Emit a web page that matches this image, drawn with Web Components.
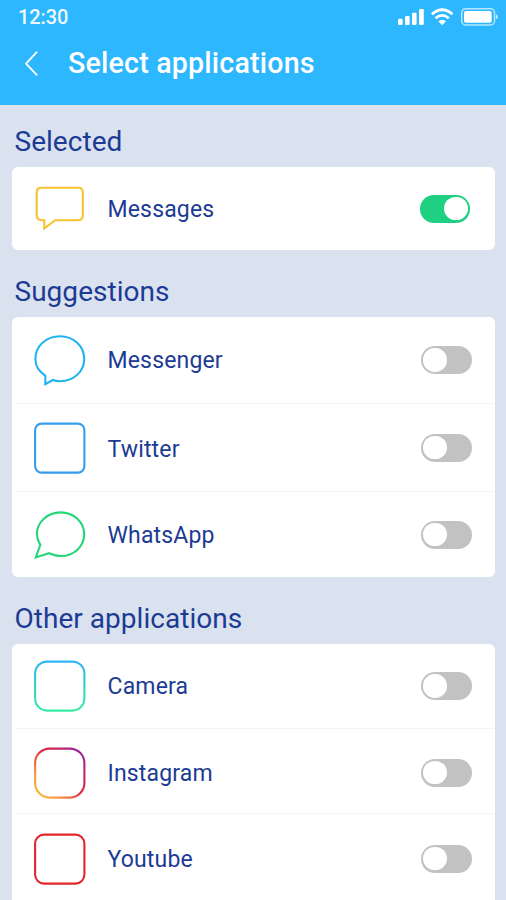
<!DOCTYPE html>
<html lang="en">
<head>
<meta charset="utf-8">
<title>Select applications</title>
<style>
html,body{margin:0;height:900px;overflow:hidden;background:#dbe2ef}
body{font-family:Roboto,"Liberation Sans",sans-serif}
</style>
</head>
<body>
<app-screen>
  <app-header slot="header" time="12:30" heading="Select applications"></app-header>
  <app-group heading="Selected" style="--head:62px">
    <app-row icon="messages" label="Messages" on style="--h:83px"></app-row>
  </app-group>
  <app-group heading="Suggestions" style="--head:67px">
    <app-row icon="messenger" label="Messenger" style="--h:87px"></app-row>
    <app-row icon="twitter" label="Twitter" style="--h:88px;--nudge:4px"></app-row>
    <app-row icon="whatsapp" label="WhatsApp" style="--h:85px"></app-row>
  </app-group>
  <app-group heading="Other applications" style="--head:67px;--tail:20px">
    <app-row icon="camera" label="Camera" style="--h:85px"></app-row>
    <app-row icon="instagram" label="Instagram" style="--h:85px;--drop:3px"></app-row>
    <app-row icon="youtube" label="Youtube" style="--h:89px"></app-row>
  </app-group>
</app-screen>
<script>
class Base extends HTMLElement {
  render(html) {
    if (!this.shadowRoot) this.attachShadow({ mode: 'open' });
    this.shadowRoot.innerHTML = html;
  }
  attr(n) { return this.getAttribute(n) || ''; }
}

class AppScreen extends Base {
  connectedCallback() {
    this.render(`<style>
      :host{display:flex;flex-direction:column;width:506px;height:900px;overflow:hidden;background:#dbe2ef}
      main{display:flex;flex-direction:column;padding:0 11px 0 12px}
    </style><slot name="header"></slot><main><slot></slot></main>`);
  }
}

class StatusBar extends Base {
  connectedCallback() {
    this.render(`<style>
      :host{display:flex;justify-content:space-between;align-items:center;height:34px;padding:0 8px 0 18px;color:#fff}
      span{font-weight:500;font-size:20px;line-height:34px;letter-spacing:-.1px;opacity:.93}
      svg{display:block}
    </style><span>${this.attr('time')}</span>
    <svg width="102" height="24" viewBox="396 5 102 24" fill="#fff">
      <rect x="398" y="18.7" width="4.6" height="6.3" rx="1.2"/><rect x="405" y="16" width="4.6" height="9" rx="1.2"/>
      <rect x="412" y="12.7" width="4.6" height="12.3" rx="1.2"/><rect x="419" y="9" width="4.8" height="16" rx="1.2"/>
      <g fill="none" stroke="#fff" stroke-width="2.8">
        <path d="M431.9 14.3Q442.2 5.2 452.5 14.3"/><path d="M435.6 18.2Q442.2 12.6 448.8 18.2"/>
      </g>
      <path d="M438.4 21.2Q442.2 18.2 446 21.2L442.2 25.2Z"/>
      <rect x="461.7" y="8.7" width="32.8" height="16.3" rx="4" fill="none" stroke="#fff" stroke-opacity=".65" stroke-width="1.5"/>
      <rect x="464" y="11" width="27.7" height="11.7" rx="1.8"/>
      <path d="M495.8 14V19.6Q498 18.5 498 16.8T495.8 14Z" opacity=".7"/>
    </svg>`);
  }
}

class AppHeader extends Base {
  connectedCallback() {
    this.render(`<style>
      :host{display:block;flex:none;height:105px;background:#2cb7ff;color:#fff}
      .bar{display:flex;align-items:center;height:59px;padding-left:24px}
      svg{width:15px;height:26px;margin-right:29px}
      h1{margin:0;font-size:28.6px;font-weight:500;letter-spacing:.2px;line-height:59px;white-space:nowrap}
    </style><status-bar time="${this.attr('time')}"></status-bar>
    <div class="bar"><svg viewBox="0 0 15 26" fill="none" stroke="#fff" stroke-width="1.8" stroke-linecap="round" stroke-linejoin="round"><path d="M12.7 1.2L2 12.6L12.7 23.8"/></svg>
    <h1>${this.attr('heading')}</h1></div>`);
  }
}

class AppGroup extends Base {
  connectedCallback() {
    this.render(`<style>
      :host{display:block;flex:none}
      h2{box-sizing:border-box;margin:0;height:var(--head);padding:0 0 9px 2.5px;display:flex;align-items:flex-end;
        font-size:28px;line-height:33px;font-weight:400;letter-spacing:.03px;color:#1c3b94;white-space:nowrap}
      .card{background:#fff;border-radius:6px;overflow:hidden;padding-bottom:var(--tail,0)}
      ::slotted(app-row:not(:last-child)){border-bottom:1px solid #f3f4f6}
    </style><h2>${this.attr('heading')}</h2><div class="card"><slot></slot></div>`);
  }
}

const box = (r, s) => `<rect x="1.1" y="1.6" width="49.3" height="49" rx="${r}" stroke="${s}"/>`;
const ICONS = {
  messages: '<path stroke="#f6c231" d="M7.3 4.7H44.2Q48.8 4.7 48.8 9.3V32.6Q48.8 37.2 44.2 37.2H21.2L10.3 45.3V37.2H8Q2.7 37.2 2.7 32.6V9.3Q2.7 4.7 7.3 4.7Z"/>',
  messenger: '<path stroke="#22b4f0" d="M11.3 50.2V41.6C5 37.4 1.4 31.8 1.4 25.2C1.4 12 12.2 2.2 25.9 2.2S50.2 12 50.2 24.7C50.2 38.4 39 47.2 26 47.2Q22 47.2 18.8 46Z"/>',
  twitter: box(6.5, '#369cec'),
  whatsapp: '<path stroke="#25d777" d="M1.8 48.4L6.3 35.9C4 32.2 2.9 29 2.9 25C2.9 13 13.5 3.4 26.6 3.4S50.2 13 50.2 25.2S39.8 47 27 47C22.4 47 18.7 45.7 15 44.2Z"/>',
  camera: '<defs><linearGradient id="c" x2="0" y2="1"><stop stop-color="#31b4f4"/><stop offset="1" stop-color="#38eba4"/></linearGradient></defs>' + box(12, 'url(#c)'),
  instagram: '<defs><linearGradient id="i" x1="0" y1="1" x2="1" y2="0"><stop stop-color="#fcbf3a"/><stop offset=".25" stop-color="#f79447"/><stop offset=".52" stop-color="#e32b3c"/><stop offset=".75" stop-color="#c02568"/><stop offset="1" stop-color="#8a28ad"/></linearGradient></defs>' + box(14.5, 'url(#i)'),
  youtube: box(9, '#e3262b')
};

class AppIcon extends Base {
  connectedCallback() {
    this.render(`<style>:host{display:block;width:52px;height:52px}svg{display:block}</style>
    <svg width="52" height="52" viewBox="0 0 52 52" fill="none" stroke-width="2.1" stroke-linejoin="miter">${ICONS[this.attr('name')]}</svg>`);
  }
}

class ToggleSwitch extends Base {
  connectedCallback() {
    this.render(`<style>
      :host{box-sizing:border-box;display:flex;align-items:center;width:50.5px;height:28px;padding:0 2px;border-radius:14px;background:#c2c2c2}
      :host([on]){background:#1fd082;justify-content:flex-end;margin-right:1.5px}
      i{width:23.6px;height:23.6px;border-radius:50%;background:#fff}
    </style><i></i>`);
  }
}

class AppRow extends Base {
  connectedCallback() {
    this.render(`<style>
      :host{box-sizing:border-box;display:flex;align-items:center;height:var(--h);margin:0 1px 0 4px;padding:var(--drop,0) 22.5px 0 17.5px}
      span{flex:1;margin-left:22px;padding-top:var(--nudge,2px);font-size:23px;letter-spacing:.16px;line-height:30px;color:#1c3b94;white-space:nowrap}
    </style><app-icon name="${this.attr('icon')}"></app-icon><span>${this.attr('label')}</span>
    <toggle-switch ${this.hasAttribute('on') ? 'on' : ''}></toggle-switch>`);
  }
}

customElements.define('status-bar', StatusBar);
customElements.define('app-icon', AppIcon);
customElements.define('toggle-switch', ToggleSwitch);
customElements.define('app-header', AppHeader);
customElements.define('app-row', AppRow);
customElements.define('app-group', AppGroup);
customElements.define('app-screen', AppScreen);
</script>
</body>
</html>
